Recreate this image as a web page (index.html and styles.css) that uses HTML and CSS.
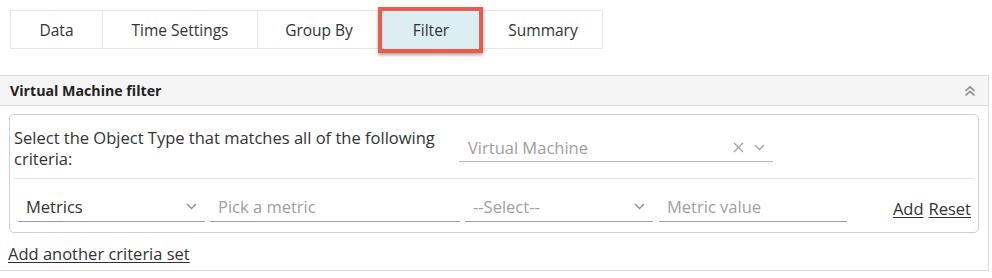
FILE: index.html
```html
<!DOCTYPE html>
<html>
<head>
<meta charset="utf-8">
<link rel="stylesheet" href="styles.css">
</head>
<body>
<div class="tabs">
  <div class="tab">Data</div>
  <div class="tab">Time Settings</div>
  <div class="tab">Group By</div>
  <div class="tab tab-active">Filter</div>
  <div class="tab">Summary</div>
</div>

<section class="panel">
  <header class="panel-head">
    <span class="panel-title">Virtual Machine filter</span>
    <svg class="collapse" width="12" height="12" viewBox="0 0 12 12">
      <path d="M1.5 6 L6 1.8 L10.5 6 M1.5 10.5 L6 6.3 L10.5 10.5" fill="none" stroke="#8a8a8a" stroke-width="1.6"/>
    </svg>
  </header>
  <div class="panel-body">
    <div class="criteria">
      <div class="row-type">
        <div class="type-label">Select the Object Type that matches all of the following criteria:</div>
        <div class="field field-type">
          <span class="muted">Virtual Machine</span>
          <span class="type-icons">
            <svg width="11" height="11" viewBox="0 0 11 11"><path d="M1 1 L10 10 M10 1 L1 10" stroke="#a3a3a3" stroke-width="1.3"/></svg>
            <svg class="chev" width="11" height="7" viewBox="0 0 11 7"><path d="M1 1 L5.5 5.5 L10 1" fill="none" stroke="#a3a3a3" stroke-width="1.3"/></svg>
          </span>
        </div>
      </div>
      <div class="row-metric">
        <div class="field f-kind">
          <span>Metrics</span>
          <svg class="chev" width="11" height="7" viewBox="0 0 11 7"><path d="M1 1 L5.5 5.5 L10 1" fill="none" stroke="#8f8f8f" stroke-width="1.3"/></svg>
        </div>
        <div class="field f-metric"><span class="muted">Pick a metric</span></div>
        <div class="field f-op">
          <span class="muted">--Select--</span>
          <svg class="chev" width="11" height="7" viewBox="0 0 11 7"><path d="M1 1 L5.5 5.5 L10 1" fill="none" stroke="#8f8f8f" stroke-width="1.3"/></svg>
        </div>
        <div class="field f-value"><span class="muted">Metric value</span></div>
        <div class="actions">
          <a class="link">Add</a>
          <a class="link">Reset</a>
        </div>
      </div>
    </div>
    <a class="link add-set">Add another criteria set</a>
  </div>
</section>
</body>
</html>
```

FILE: styles.css
```css
* { box-sizing: border-box; }
body {
  margin: 0;
  background: #fff;
  font-family: "Open Sans", "Liberation Sans", sans-serif;
  font-size: 16.5px;
  color: #333;
}
.tabs {
  display: grid;
  grid-template-columns: 92px 155px 123px 101px 122px;
  margin: 10px 0 0 10px;
  width: 593px;
  height: 39px;
  border: 1px solid #e8e8e8;
  font-size: 15.5px;
}
.tab {
  display: flex;
  align-items: center;
  justify-content: center;
  border-right: 1px solid #e8e8e8;
  color: #333;
}
.tab:last-child { border-right: none; }
.tab-active {
  position: relative;
  background: #ddeef3;
}
.tab-active::after {
  content: "";
  position: absolute;
  left: -3px; right: -2px; top: -4px; bottom: -5px;
  border: 4px solid #ec5a4d;
  box-shadow: 0 2px 3px rgba(0,0,0,0.35);
}
.panel {
  margin: 26px 0 0 -1px;
  width: 990px;
  border: 1px solid #dcdcdc;
}
.panel-head {
  display: flex;
  align-items: center;
  justify-content: space-between;
  height: 30px;
  padding: 0 12px 0 10px;
  background: #f5f5f5;
  border-bottom: 1px solid #dcdcdc;
}
.panel-title {
  font-weight: 700;
  font-size: 14.2px;
  color: #222;
}
.panel-body {
  padding: 8px 9px 5px 9px;
}
.criteria {
  border: 1px solid #cfcfcf;
  border-radius: 5px;
}
.row-type {
  display: flex;
  align-items: center;
  height: 64px;
  margin: 0 4px;
  border-bottom: 1px solid #e4e4e4;
}
.type-label {
  width: 445px;
  line-height: 21px;
  padding-top: 2px;
}
.field {
  display: flex;
  align-items: center;
  justify-content: space-between;
  height: 30px;
  padding: 0 8px;
  border-bottom: 1px solid #9e9e9e;
}
.field-type {
  width: 314px;
  padding-left: 9px;
  padding-top: 2px;
  border-bottom-color: #b8b8b8;
}
.type-icons {
  display: flex;
  align-items: center;
  gap: 10px;
}
.muted { color: #a0a0a0; }
.row-metric {
  display: flex;
  align-items: center;
  gap: 5px;
  padding: 13px 7px 10px 8px;
}
.f-kind { width: 187px; }
.f-metric { width: 250px; }
.f-op { width: 188px; }
.f-value { width: 188px; margin-left: 1px; }
.actions {
  margin-left: auto;
  display: flex;
  gap: 5px;
  padding-top: 2px;
}
.link {
  color: #333;
  text-decoration: underline;
  text-underline-offset: 2px;
  cursor: pointer;
}
.add-set {
  display: inline-block;
  margin-top: 10px;
  margin-left: -1px;
  line-height: 22px;
}
```
